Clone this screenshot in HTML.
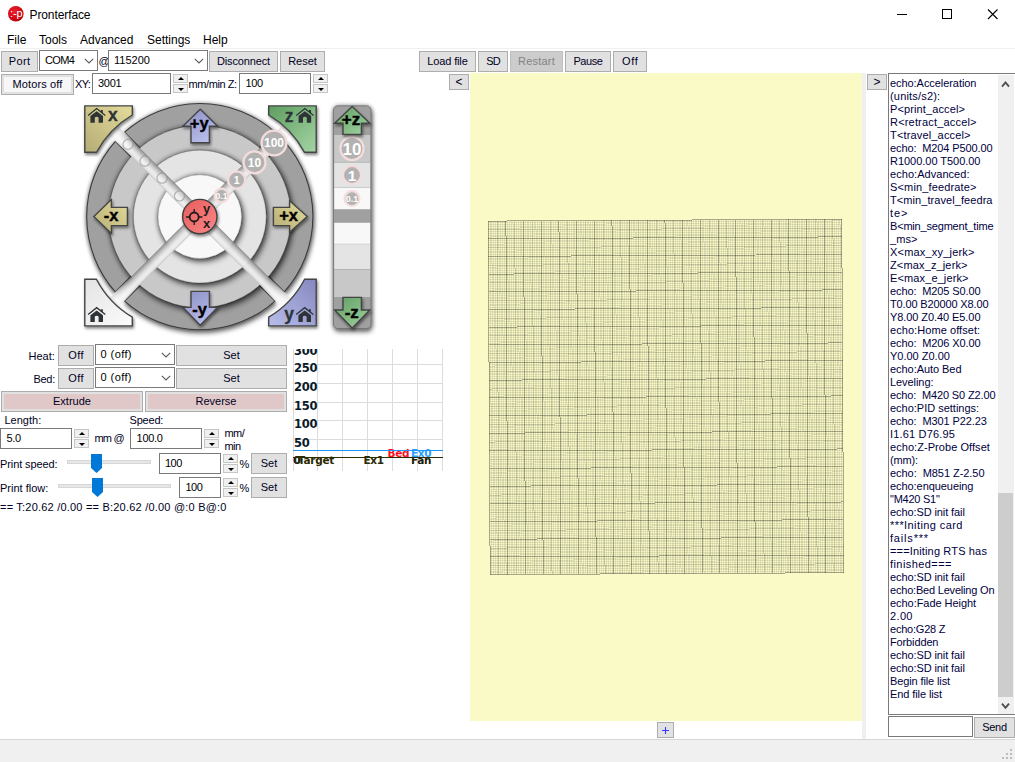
<!DOCTYPE html><html><head><meta charset="utf-8"><title>Pronterface</title><style>
html,body{margin:0;padding:0;}
body{width:1015px;height:762px;overflow:hidden;background:#fff;position:relative;font-family:"Liberation Sans",sans-serif;font-size:11px;color:#000;}
.a{position:absolute;white-space:nowrap;}
.t{position:absolute;white-space:nowrap;line-height:13px;font-size:11px;color:#000022;}
.btn{position:absolute;box-sizing:border-box;background:#e1e1e1;border:1px solid #adadad;text-align:center;font-size:11px;white-space:nowrap;color:#000022;}
.dis{background:#cccccc;border-color:#bfbfbf;color:#838383;}
.fld{position:absolute;box-sizing:border-box;background:#fff;border:1px solid #7a7a7a;font-size:11px;white-space:nowrap;}
.sp{position:absolute;box-sizing:border-box;background:#f0f0f0;border:1px solid #c6c6c6;}
.sp i{position:absolute;left:50%;margin-left:-3px;width:0;height:0;border-left:3px solid transparent;border-right:3px solid transparent;}
.sp i.u{border-bottom:3px solid #000;top:2px;}
.sp i.d{border-top:3px solid #000;top:3px;}
.log{position:absolute;left:890px;top:77px;color:#000040;font-size:11px;line-height:13px;white-space:pre;}
.gl{position:absolute;font-family:"DejaVu Sans","Liberation Sans",sans-serif;font-weight:bold;font-size:11px;line-height:13px;white-space:nowrap;}
</style></head><body>
<svg class="a" style="left:7px;top:5px" width="18" height="18" viewBox="0 0 18 18"><defs><radialGradient id="ic" cx="0.4" cy="0.35" r="0.75"><stop offset="0" stop-color="#e8222c"/><stop offset="0.55" stop-color="#d60a16"/><stop offset="0.85" stop-color="#b8000c"/><stop offset="1" stop-color="#6e0006"/></radialGradient></defs><circle cx="8.8" cy="8.8" r="7.8" fill="url(#ic)"/><text x="2.9" y="11.6" font-family="Liberation Sans,sans-serif" font-size="11" fill="#fff">:-p</text></svg>
<span class="t" style="left:29.5px;top:9px;font-size:12px;color:#000;letter-spacing:-0.1px;">Pronterface</span>
<svg class="a" style="left:890px;top:0" width="125" height="30" viewBox="890 0 125 30"><g fill="none" stroke="#000" stroke-width="1"><path d="M897 14.5H907"/><rect x="942.5" y="9.5" width="9" height="9"/><path d="M988 9.5 L997.5 19 M997.5 9.5 L988 19" stroke-width="1.1"/></g></svg>
<span class="t" style="left:7px;top:34px;font-size:12px;color:#000;">File</span>
<span class="t" style="left:39px;top:34px;font-size:12px;color:#000;">Tools</span>
<span class="t" style="left:80px;top:34px;font-size:12px;color:#000;">Advanced</span>
<span class="t" style="left:147px;top:34px;font-size:12px;color:#000;">Settings</span>
<span class="t" style="left:203px;top:34px;font-size:12px;color:#000;">Help</span>
<div class="a" style="left:0;top:48px;width:1015px;height:1px;background:#f0f0f0"></div>
<div class="btn " style="left:1px;top:51px;width:37px;height:21px;line-height:19px;letter-spacing:0.4px;text-indent:0.4px;">Port</div>
<div class="fld" style="left:39px;top:50px;width:59px;height:21px;line-height:19px;padding-left:5px;"><span style="letter-spacing:-0.6px">COM4</span></div>
<svg class="a" style="left:83px;top:56.5px" width="12" height="8" viewBox="0 0 12 8"><path d="M1.8 1.8 L6 6 L10.2 1.8" fill="none" stroke="#5a5a5a" stroke-width="1.1"/></svg>
<span class="t" style="left:98.5px;top:55px;">@</span>
<div class="fld" style="left:108px;top:50px;width:100px;height:21px;line-height:19px;padding-left:5px;">115200</div>
<svg class="a" style="left:193px;top:56.5px" width="12" height="8" viewBox="0 0 12 8"><path d="M1.8 1.8 L6 6 L10.2 1.8" fill="none" stroke="#5a5a5a" stroke-width="1.1"/></svg>
<div class="btn " style="left:209px;top:51px;width:69px;height:21px;line-height:19px;letter-spacing:-0.14px;">Disconnect</div>
<div class="btn " style="left:280px;top:51px;width:45px;height:21px;line-height:19px;">Reset</div>
<div class="btn " style="left:419px;top:51px;width:57px;height:21px;line-height:19px;letter-spacing:-0.14px;">Load file</div>
<div class="btn " style="left:478px;top:51px;width:30px;height:21px;line-height:19px;letter-spacing:-0.8px;">SD</div>
<div class="btn dis" style="left:510px;top:51px;width:53px;height:21px;line-height:19px;letter-spacing:0.2px;">Restart</div>
<div class="btn " style="left:565px;top:51px;width:46px;height:21px;line-height:19px;letter-spacing:-0.4px;">Pause</div>
<div class="btn " style="left:613px;top:51px;width:34px;height:21px;line-height:19px;letter-spacing:0.7px;text-indent:0.7px;">Off</div>
<div class="btn " style="left:1px;top:74px;width:73px;height:21px;line-height:19px;letter-spacing:0.13px;background:#f6f6f6;box-shadow:inset 0 0 0 2px #e1e1e1;">Motors off</div>
<span class="t" style="left:75px;top:78px;letter-spacing:-0.7px;">XY:</span>
<div class="fld" style="left:92px;top:73px;width:79px;height:21px;line-height:19px;padding-left:5px;"><span style="letter-spacing:-0.25px">3001</span></div>
<div class="sp" style="left:173px;top:74px;width:15px;height:9px"><i class="u"></i></div>
<div class="sp" style="left:173px;top:84px;width:15px;height:9px"><i class="d"></i></div>
<span class="t" style="left:188.6px;top:78px;letter-spacing:-0.42px;">mm/min Z:</span>
<div class="fld" style="left:239px;top:73px;width:72px;height:21px;line-height:19px;padding-left:5.4px;"><span style="letter-spacing:-0.3px">100</span></div>
<div class="sp" style="left:313px;top:74px;width:15px;height:9px"><i class="u"></i></div>
<div class="sp" style="left:313px;top:84px;width:15px;height:9px"><i class="d"></i></div>
<div class="btn " style="left:449px;top:74px;width:20px;height:16px;line-height:14px;font-size:12px;">&lt;</div>
<div class="btn " style="left:867px;top:74px;width:20px;height:16px;line-height:14px;font-size:12px;">&gt;</div>
<div class="a" style="left:470px;top:73px;width:392px;height:648px;background:#fafac7"></div>
<div class="a" style="left:862px;top:73px;width:4px;height:666px;background:#f0f0f0"></div>
<svg class="a" style="left:470px;top:73px" width="392" height="648" viewBox="470 73 392 648" shape-rendering="crispEdges"><g transform="translate(665.95 396.9) rotate(-0.31)" fill="none" stroke="#0f0f0f" stroke-width="1"><path stroke-opacity="0.09" d="M-174.98 -176.75V176.75M-176.75 -174.98H176.75M-173.22 -176.75V176.75M-176.75 -173.22H176.75M-171.45 -176.75V176.75M-176.75 -171.45H176.75M-169.68 -176.75V176.75M-176.75 -169.68H176.75M-166.15 -176.75V176.75M-176.75 -166.15H176.75M-164.38 -176.75V176.75M-176.75 -164.38H176.75M-162.61 -176.75V176.75M-176.75 -162.61H176.75M-160.84 -176.75V176.75M-176.75 -160.84H176.75M-157.31 -176.75V176.75M-176.75 -157.31H176.75M-155.54 -176.75V176.75M-176.75 -155.54H176.75M-153.77 -176.75V176.75M-176.75 -153.77H176.75M-152.00 -176.75V176.75M-176.75 -152.00H176.75M-148.47 -176.75V176.75M-176.75 -148.47H176.75M-146.70 -176.75V176.75M-176.75 -146.70H176.75M-144.94 -176.75V176.75M-176.75 -144.94H176.75M-143.17 -176.75V176.75M-176.75 -143.17H176.75M-139.63 -176.75V176.75M-176.75 -139.63H176.75M-137.87 -176.75V176.75M-176.75 -137.87H176.75M-136.10 -176.75V176.75M-176.75 -136.10H176.75M-134.33 -176.75V176.75M-176.75 -134.33H176.75M-130.80 -176.75V176.75M-176.75 -130.80H176.75M-129.03 -176.75V176.75M-176.75 -129.03H176.75M-127.26 -176.75V176.75M-176.75 -127.26H176.75M-125.49 -176.75V176.75M-176.75 -125.49H176.75M-121.96 -176.75V176.75M-176.75 -121.96H176.75M-120.19 -176.75V176.75M-176.75 -120.19H176.75M-118.42 -176.75V176.75M-176.75 -118.42H176.75M-116.66 -176.75V176.75M-176.75 -116.66H176.75M-113.12 -176.75V176.75M-176.75 -113.12H176.75M-111.35 -176.75V176.75M-176.75 -111.35H176.75M-109.58 -176.75V176.75M-176.75 -109.58H176.75M-107.82 -176.75V176.75M-176.75 -107.82H176.75M-104.28 -176.75V176.75M-176.75 -104.28H176.75M-102.52 -176.75V176.75M-176.75 -102.52H176.75M-100.75 -176.75V176.75M-176.75 -100.75H176.75M-98.98 -176.75V176.75M-176.75 -98.98H176.75M-95.44 -176.75V176.75M-176.75 -95.44H176.75M-93.68 -176.75V176.75M-176.75 -93.68H176.75M-91.91 -176.75V176.75M-176.75 -91.91H176.75M-90.14 -176.75V176.75M-176.75 -90.14H176.75M-86.61 -176.75V176.75M-176.75 -86.61H176.75M-84.84 -176.75V176.75M-176.75 -84.84H176.75M-83.07 -176.75V176.75M-176.75 -83.07H176.75M-81.30 -176.75V176.75M-176.75 -81.30H176.75M-77.77 -176.75V176.75M-176.75 -77.77H176.75M-76.00 -176.75V176.75M-176.75 -76.00H176.75M-74.23 -176.75V176.75M-176.75 -74.23H176.75M-72.47 -176.75V176.75M-176.75 -72.47H176.75M-68.93 -176.75V176.75M-176.75 -68.93H176.75M-67.16 -176.75V176.75M-176.75 -67.16H176.75M-65.40 -176.75V176.75M-176.75 -65.40H176.75M-63.63 -176.75V176.75M-176.75 -63.63H176.75M-60.09 -176.75V176.75M-176.75 -60.09H176.75M-58.33 -176.75V176.75M-176.75 -58.33H176.75M-56.56 -176.75V176.75M-176.75 -56.56H176.75M-54.79 -176.75V176.75M-176.75 -54.79H176.75M-51.26 -176.75V176.75M-176.75 -51.26H176.75M-49.49 -176.75V176.75M-176.75 -49.49H176.75M-47.72 -176.75V176.75M-176.75 -47.72H176.75M-45.95 -176.75V176.75M-176.75 -45.95H176.75M-42.42 -176.75V176.75M-176.75 -42.42H176.75M-40.65 -176.75V176.75M-176.75 -40.65H176.75M-38.88 -176.75V176.75M-176.75 -38.88H176.75M-37.12 -176.75V176.75M-176.75 -37.12H176.75M-33.58 -176.75V176.75M-176.75 -33.58H176.75M-31.81 -176.75V176.75M-176.75 -31.81H176.75M-30.05 -176.75V176.75M-176.75 -30.05H176.75M-28.28 -176.75V176.75M-176.75 -28.28H176.75M-24.75 -176.75V176.75M-176.75 -24.75H176.75M-22.98 -176.75V176.75M-176.75 -22.98H176.75M-21.21 -176.75V176.75M-176.75 -21.21H176.75M-19.44 -176.75V176.75M-176.75 -19.44H176.75M-15.91 -176.75V176.75M-176.75 -15.91H176.75M-14.14 -176.75V176.75M-176.75 -14.14H176.75M-12.37 -176.75V176.75M-176.75 -12.37H176.75M-10.60 -176.75V176.75M-176.75 -10.60H176.75M-7.07 -176.75V176.75M-176.75 -7.07H176.75M-5.30 -176.75V176.75M-176.75 -5.30H176.75M-3.53 -176.75V176.75M-176.75 -3.53H176.75M-1.77 -176.75V176.75M-176.75 -1.77H176.75M1.77 -176.75V176.75M-176.75 1.77H176.75M3.53 -176.75V176.75M-176.75 3.53H176.75M5.30 -176.75V176.75M-176.75 5.30H176.75M7.07 -176.75V176.75M-176.75 7.07H176.75M10.61 -176.75V176.75M-176.75 10.61H176.75M12.37 -176.75V176.75M-176.75 12.37H176.75M14.14 -176.75V176.75M-176.75 14.14H176.75M15.91 -176.75V176.75M-176.75 15.91H176.75M19.44 -176.75V176.75M-176.75 19.44H176.75M21.21 -176.75V176.75M-176.75 21.21H176.75M22.98 -176.75V176.75M-176.75 22.98H176.75M24.75 -176.75V176.75M-176.75 24.75H176.75M28.28 -176.75V176.75M-176.75 28.28H176.75M30.05 -176.75V176.75M-176.75 30.05H176.75M31.81 -176.75V176.75M-176.75 31.81H176.75M33.58 -176.75V176.75M-176.75 33.58H176.75M37.12 -176.75V176.75M-176.75 37.12H176.75M38.89 -176.75V176.75M-176.75 38.89H176.75M40.65 -176.75V176.75M-176.75 40.65H176.75M42.42 -176.75V176.75M-176.75 42.42H176.75M45.96 -176.75V176.75M-176.75 45.96H176.75M47.72 -176.75V176.75M-176.75 47.72H176.75M49.49 -176.75V176.75M-176.75 49.49H176.75M51.26 -176.75V176.75M-176.75 51.26H176.75M54.79 -176.75V176.75M-176.75 54.79H176.75M56.56 -176.75V176.75M-176.75 56.56H176.75M58.33 -176.75V176.75M-176.75 58.33H176.75M60.09 -176.75V176.75M-176.75 60.09H176.75M63.63 -176.75V176.75M-176.75 63.63H176.75M65.40 -176.75V176.75M-176.75 65.40H176.75M67.17 -176.75V176.75M-176.75 67.17H176.75M68.93 -176.75V176.75M-176.75 68.93H176.75M72.47 -176.75V176.75M-176.75 72.47H176.75M74.24 -176.75V176.75M-176.75 74.24H176.75M76.00 -176.75V176.75M-176.75 76.00H176.75M77.77 -176.75V176.75M-176.75 77.77H176.75M81.31 -176.75V176.75M-176.75 81.31H176.75M83.07 -176.75V176.75M-176.75 83.07H176.75M84.84 -176.75V176.75M-176.75 84.84H176.75M86.61 -176.75V176.75M-176.75 86.61H176.75M90.14 -176.75V176.75M-176.75 90.14H176.75M91.91 -176.75V176.75M-176.75 91.91H176.75M93.68 -176.75V176.75M-176.75 93.68H176.75M95.44 -176.75V176.75M-176.75 95.44H176.75M98.98 -176.75V176.75M-176.75 98.98H176.75M100.75 -176.75V176.75M-176.75 100.75H176.75M102.51 -176.75V176.75M-176.75 102.51H176.75M104.28 -176.75V176.75M-176.75 104.28H176.75M107.82 -176.75V176.75M-176.75 107.82H176.75M109.59 -176.75V176.75M-176.75 109.59H176.75M111.35 -176.75V176.75M-176.75 111.35H176.75M113.12 -176.75V176.75M-176.75 113.12H176.75M116.66 -176.75V176.75M-176.75 116.66H176.75M118.42 -176.75V176.75M-176.75 118.42H176.75M120.19 -176.75V176.75M-176.75 120.19H176.75M121.96 -176.75V176.75M-176.75 121.96H176.75M125.49 -176.75V176.75M-176.75 125.49H176.75M127.26 -176.75V176.75M-176.75 127.26H176.75M129.03 -176.75V176.75M-176.75 129.03H176.75M130.80 -176.75V176.75M-176.75 130.80H176.75M134.33 -176.75V176.75M-176.75 134.33H176.75M136.10 -176.75V176.75M-176.75 136.10H176.75M137.87 -176.75V176.75M-176.75 137.87H176.75M139.63 -176.75V176.75M-176.75 139.63H176.75M143.17 -176.75V176.75M-176.75 143.17H176.75M144.94 -176.75V176.75M-176.75 144.94H176.75M146.70 -176.75V176.75M-176.75 146.70H176.75M148.47 -176.75V176.75M-176.75 148.47H176.75M152.00 -176.75V176.75M-176.75 152.00H176.75M153.77 -176.75V176.75M-176.75 153.77H176.75M155.54 -176.75V176.75M-176.75 155.54H176.75M157.31 -176.75V176.75M-176.75 157.31H176.75M160.84 -176.75V176.75M-176.75 160.84H176.75M162.61 -176.75V176.75M-176.75 162.61H176.75M164.38 -176.75V176.75M-176.75 164.38H176.75M166.15 -176.75V176.75M-176.75 166.15H176.75M169.68 -176.75V176.75M-176.75 169.68H176.75M171.45 -176.75V176.75M-176.75 171.45H176.75M173.22 -176.75V176.75M-176.75 173.22H176.75M174.98 -176.75V176.75M-176.75 174.98H176.75"/><path stroke-opacity="0.19" d="M-167.91 -176.75V176.75M-176.75 -167.91H176.75M-150.24 -176.75V176.75M-176.75 -150.24H176.75M-132.56 -176.75V176.75M-176.75 -132.56H176.75M-114.89 -176.75V176.75M-176.75 -114.89H176.75M-97.21 -176.75V176.75M-176.75 -97.21H176.75M-79.54 -176.75V176.75M-176.75 -79.54H176.75M-61.86 -176.75V176.75M-176.75 -61.86H176.75M-44.19 -176.75V176.75M-176.75 -44.19H176.75M-26.51 -176.75V176.75M-176.75 -26.51H176.75M-8.84 -176.75V176.75M-176.75 -8.84H176.75M8.84 -176.75V176.75M-176.75 8.84H176.75M26.51 -176.75V176.75M-176.75 26.51H176.75M44.19 -176.75V176.75M-176.75 44.19H176.75M61.86 -176.75V176.75M-176.75 61.86H176.75M79.54 -176.75V176.75M-176.75 79.54H176.75M97.21 -176.75V176.75M-176.75 97.21H176.75M114.89 -176.75V176.75M-176.75 114.89H176.75M132.56 -176.75V176.75M-176.75 132.56H176.75M150.24 -176.75V176.75M-176.75 150.24H176.75M167.91 -176.75V176.75M-176.75 167.91H176.75"/><path stroke-opacity="0.35" d="M-176.75 -176.75V176.75M-176.75 -176.75H176.75M-159.07 -176.75V176.75M-176.75 -159.07H176.75M-141.40 -176.75V176.75M-176.75 -141.40H176.75M-123.72 -176.75V176.75M-176.75 -123.72H176.75M-106.05 -176.75V176.75M-176.75 -106.05H176.75M-88.38 -176.75V176.75M-176.75 -88.38H176.75M-70.70 -176.75V176.75M-176.75 -70.70H176.75M-53.02 -176.75V176.75M-176.75 -53.02H176.75M-35.35 -176.75V176.75M-176.75 -35.35H176.75M-17.67 -176.75V176.75M-176.75 -17.67H176.75M0.00 -176.75V176.75M-176.75 0.00H176.75M17.68 -176.75V176.75M-176.75 17.68H176.75M35.35 -176.75V176.75M-176.75 35.35H176.75M53.03 -176.75V176.75M-176.75 53.03H176.75M70.70 -176.75V176.75M-176.75 70.70H176.75M88.38 -176.75V176.75M-176.75 88.38H176.75M106.05 -176.75V176.75M-176.75 106.05H176.75M123.73 -176.75V176.75M-176.75 123.73H176.75M141.40 -176.75V176.75M-176.75 141.40H176.75M159.07 -176.75V176.75M-176.75 159.07H176.75M176.75 -176.75V176.75M-176.75 176.75H176.75"/></g></svg>
<div class="btn " style="left:657px;top:722px;width:17px;height:16px;line-height:14px;"></div>
<svg class="a" style="left:657px;top:722px" width="17" height="16"><path d="M5 8.5H12 M8.5 5V12" stroke="#3a3aff" stroke-width="1.1" fill="none"/></svg>
<div class="a" style="left:888px;top:73px;width:127px;height:642px;box-sizing:border-box;border:1px solid #7a7a7a;border-right:none;background:#fff"></div>
<div class="log"><div style="letter-spacing:-0.06px">echo:Acceleration</div><div style="letter-spacing:0.18px">(units/s2):</div><div style="letter-spacing:0.116px">P&lt;print_accel&gt;</div><div style="letter-spacing:0.182px">R&lt;retract_accel&gt;</div><div style="letter-spacing:0.16px">T&lt;travel_accel&gt;</div><div style="letter-spacing:-0.115px">echo:  M204 P500.00</div><div style="letter-spacing:-0.029px">R1000.00 T500.00</div><div style="letter-spacing:0.047px">echo:Advanced:</div><div style="letter-spacing:0.151px">S&lt;min_feedrate&gt;</div><div style="letter-spacing:0.072px">T&lt;min_travel_feedra</div><div style="letter-spacing:0.9px">te&gt;</div><div style="letter-spacing:-0.188px">B&lt;min_segment_time</div><div style="letter-spacing:0.094px">_ms&gt;</div><div style="letter-spacing:0.197px">X&lt;max_xy_jerk&gt;</div><div style="letter-spacing:0.141px">Z&lt;max_z_jerk&gt;</div><div style="letter-spacing:0.121px">E&lt;max_e_jerk&gt;</div><div style="letter-spacing:-0.115px">echo:  M205 S0.00</div><div style="letter-spacing:-0.142px">T0.00 B20000 X8.00</div><div style="letter-spacing:-0.077px">Y8.00 Z0.40 E5.00</div><div style="letter-spacing:0.064px">echo:Home offset:</div><div style="letter-spacing:-0.115px">echo:  M206 X0.00</div><div style="letter-spacing:-0.004px">Y0.00 Z0.00</div><div style="letter-spacing:-0.056px">echo:Auto Bed</div><div style="letter-spacing:-0.068px">Leveling:</div><div style="letter-spacing:-0.144px">echo:  M420 S0 Z2.00</div><div style="letter-spacing:-0.011px">echo:PID settings:</div><div style="letter-spacing:-0.092px">echo:  M301 P22.23</div><div style="letter-spacing:0.173px">I1.61 D76.95</div><div style="letter-spacing:0.058px">echo:Z-Probe Offset</div><div style="letter-spacing:-0.155px">(mm):</div><div style="letter-spacing:-0.052px">echo:  M851 Z-2.50</div><div style="letter-spacing:-0.066px">echo:enqueueing</div><div style="letter-spacing:-0.243px">&quot;M420 S1&quot;</div><div style="letter-spacing:-0.096px">echo:SD init fail</div><div style="letter-spacing:0.417px">***Initing card</div><div style="letter-spacing:0.813px">fails***</div><div style="letter-spacing:0.154px">===Initing RTS has</div><div style="letter-spacing:0.431px">finished===</div><div style="letter-spacing:-0.096px">echo:SD init fail</div><div style="letter-spacing:-0.197px">echo:Bed Leveling On</div><div style="letter-spacing:-0.05px">echo:Fade Height</div><div style="letter-spacing:0.359px">2.00</div><div style="letter-spacing:-0.22px">echo:G28 Z</div><div style="letter-spacing:-0.131px">Forbidden</div><div style="letter-spacing:-0.096px">echo:SD init fail</div><div style="letter-spacing:-0.096px">echo:SD init fail</div><div style="letter-spacing:-0.119px">Begin file list</div><div style="letter-spacing:-0.092px">End file list</div></div>
<div class="a" style="left:998px;top:75px;width:16px;height:639px;background:#f0f0f0"></div>
<div class="a" style="left:998px;top:493px;width:15px;height:204px;background:#cdcdcd"></div>
<svg class="a" style="left:998px;top:74px" width="16" height="641"><g fill="none" stroke="#505050" stroke-width="1.9"><path d="M4 12.6 L7.5 8.4 L11 12.6"/><path d="M4 629.6 L7.5 633.8 L11 629.6"/></g></svg>
<div class="fld" style="left:888px;top:716px;width:85px;height:21px;line-height:19px;padding-left:5px;"></div>
<div class="btn " style="left:974px;top:717px;width:41px;height:21px;line-height:19px;letter-spacing:-0.3px;">Send</div>
<div class="a" style="left:0;top:739px;width:1015px;height:23px;background:#f0f0f0;border-top:1px solid #d7d7d7;box-sizing:border-box"></div>
<svg class="a" style="left:1001px;top:748px" width="14" height="14"><g fill="#bcbcbc"><rect x="9" y="1" width="2" height="2"/><rect x="5" y="5" width="2" height="2"/><rect x="9" y="5" width="2" height="2"/><rect x="1" y="9" width="2" height="2"/><rect x="5" y="9" width="2" height="2"/><rect x="9" y="9" width="2" height="2"/></g></svg>
<span class="t" style="left:28.5px;top:350px;">Heat:</span>
<div class="btn " style="left:58px;top:345px;width:36px;height:21px;line-height:19px;letter-spacing:0.4px;text-indent:0.4px;">Off</div>
<div class="fld" style="left:95px;top:344px;width:80px;height:21px;line-height:19px;padding-left:4.6px;"><span style="letter-spacing:0.4px">0 (off)</span></div>
<svg class="a" style="left:160px;top:350.5px" width="12" height="8" viewBox="0 0 12 8"><path d="M1.8 1.8 L6 6 L10.2 1.8" fill="none" stroke="#5a5a5a" stroke-width="1.1"/></svg>
<div class="btn " style="left:176px;top:345px;width:111px;height:21px;line-height:19px;">Set</div>
<span class="t" style="left:33.5px;top:373px;letter-spacing:-0.3px;">Bed:</span>
<div class="btn " style="left:58px;top:368px;width:36px;height:21px;line-height:19px;letter-spacing:0.4px;text-indent:0.4px;">Off</div>
<div class="fld" style="left:95px;top:367px;width:80px;height:21px;line-height:19px;padding-left:4.6px;"><span style="letter-spacing:0.4px">0 (off)</span></div>
<svg class="a" style="left:160px;top:373.5px" width="12" height="8" viewBox="0 0 12 8"><path d="M1.8 1.8 L6 6 L10.2 1.8" fill="none" stroke="#5a5a5a" stroke-width="1.1"/></svg>
<div class="btn " style="left:176px;top:368px;width:111px;height:21px;line-height:19px;">Set</div>
<div class="btn " style="left:1px;top:391px;width:142px;height:21px;line-height:19px;background:#e1c8c8;box-shadow:inset 0 0 0 2px #e1e1e1;">Extrude</div>
<div class="btn " style="left:145px;top:391px;width:142px;height:21px;line-height:19px;background:#e1c8c8;box-shadow:inset 0 0 0 2px #e1e1e1;">Reverse</div>
<span class="t" style="left:4.5px;top:414px;">Length:</span>
<span class="t" style="left:129.5px;top:414px;letter-spacing:-0.2px;">Speed:</span>
<div class="fld" style="left:0px;top:428px;width:72px;height:21px;line-height:19px;padding-left:5.4px;"><span style="letter-spacing:-0.3px">5.0</span></div>
<div class="sp" style="left:74px;top:429px;width:15px;height:9px"><i class="u"></i></div>
<div class="sp" style="left:74px;top:439px;width:15px;height:9px"><i class="d"></i></div>
<span class="t" style="left:94.5px;top:432px;letter-spacing:-0.8px;">mm @</span>
<div class="fld" style="left:130px;top:428px;width:72px;height:21px;line-height:19px;padding-left:5.6px;"><span style="letter-spacing:-0.3px">100.0</span></div>
<div class="sp" style="left:204px;top:429px;width:15px;height:9px"><i class="u"></i></div>
<div class="sp" style="left:204px;top:439px;width:15px;height:9px"><i class="d"></i></div>
<span class="t" style="left:224.5px;top:427px;letter-spacing:-0.6px;">mm/</span>
<span class="t" style="left:224.5px;top:440px;letter-spacing:-0.6px;">min</span>
<span class="t" style="left:0px;top:457.5px;letter-spacing:-0.1px;">Print speed:</span>
<div class="a" style="left:67px;top:460px;width:84px;height:4px;box-sizing:border-box;background:#e7e7e7;border:1px solid #d6d6d6"></div>
<svg class="a" style="left:91px;top:454px" width="11" height="19"><path d="M0 0H11V14L5.5 19L0 14Z" fill="#0078d7"/></svg>
<div class="fld" style="left:159px;top:453px;width:62px;height:21px;line-height:19px;padding-left:5px;"><span style="letter-spacing:-0.5px">100</span></div>
<div class="sp" style="left:223px;top:454px;width:15px;height:9px"><i class="u"></i></div>
<div class="sp" style="left:223px;top:464px;width:15px;height:9px"><i class="d"></i></div>
<span class="t" style="left:239.5px;top:458px;">%</span>
<div class="btn " style="left:251px;top:453px;width:36px;height:21px;line-height:19px;">Set</div>
<span class="t" style="left:0px;top:481.5px;">Print flow:</span>
<div class="a" style="left:58px;top:484px;width:113px;height:4px;box-sizing:border-box;background:#e7e7e7;border:1px solid #d6d6d6"></div>
<svg class="a" style="left:92px;top:478px" width="11" height="19"><path d="M0 0H11V14L5.5 19L0 14Z" fill="#0078d7"/></svg>
<div class="fld" style="left:179px;top:477px;width:42px;height:21px;line-height:19px;padding-left:5.4px;"><span style="letter-spacing:-0.5px">100</span></div>
<div class="sp" style="left:223px;top:478px;width:15px;height:9px"><i class="u"></i></div>
<div class="sp" style="left:223px;top:488px;width:15px;height:9px"><i class="d"></i></div>
<span class="t" style="left:239.5px;top:482px;">%</span>
<div class="btn " style="left:251px;top:477px;width:36px;height:21px;line-height:19px;">Set</div>
<span class="t" style="left:0px;top:501px;letter-spacing:0.21px;">== T:20.62 /0.00 == B:20.62 /0.00 @:0 B@:0</span>
<div class="a" style="left:293px;top:349px;width:151px;height:122px;overflow:hidden"><svg class="a" style="left:0;top:0" width="151" height="122" viewBox="293 349 151 122" shape-rendering="crispEdges"><g stroke="#dcdcdc" stroke-width="1" fill="none"><path d="M293.5 349V471"/><path d="M317.5 349V471"/><path d="M342.5 349V471"/><path d="M367.5 349V471"/><path d="M392.5 349V471"/><path d="M417.5 349V471"/><path d="M442.5 349V471"/><path d="M293 364.5H443"/><path d="M293 383.5H443"/><path d="M293 402.5H443"/><path d="M293 420.5H443"/><path d="M293 439.5H443"/></g></svg><span class="gl" style="left:1px;top:-4.5px;color:#0a1a2a;font-size:11.5px;letter-spacing:-0.2px">300</span><span class="gl" style="left:1px;top:13px;color:#0a1a2a;font-size:11.5px;letter-spacing:-0.2px">250</span><span class="gl" style="left:1px;top:32px;color:#0a1a2a;font-size:11.5px;letter-spacing:-0.2px">200</span><span class="gl" style="left:1px;top:50.5px;color:#0a1a2a;font-size:11.5px;letter-spacing:-0.2px">150</span><span class="gl" style="left:1px;top:69px;color:#0a1a2a;font-size:11.5px;letter-spacing:-0.2px">100</span><span class="gl" style="left:1px;top:87.5px;color:#0a1a2a;font-size:11.5px;letter-spacing:-0.2px">50</span><span class="gl" style="left:0px;top:105px;color:#1e1ecc">0</span><span class="gl" style="left:0.5px;top:105px;color:#2a2a00">0</span><span class="gl" style="left:5px;top:105px;color:#2a2a00;font-size:10.5px;letter-spacing:-0.3px">Target</span><span class="gl" style="left:70.5px;top:105px;color:#2a2a00;font-size:10.5px;letter-spacing:-0.3px">Ex1</span><span class="gl" style="left:118px;top:105px;color:#1a1a00;font-size:10.5px;letter-spacing:-0.3px">Fan</span><span class="gl" style="left:94.5px;top:98px;color:#ff1020;font-size:10.5px;letter-spacing:-0.3px">Bed</span><span class="gl" style="left:118px;top:98px;color:#28a0ff;font-size:10.5px;letter-spacing:-0.3px">Ex0</span><svg class="a" style="left:0;top:0" width="151" height="122" viewBox="293 349 151 122" shape-rendering="crispEdges"><path d="M293 450.5H443" stroke="#1e96ff" stroke-width="1"/><path d="M293 457.5H443" stroke="#2d2d00" stroke-width="1"/></svg></div>
<svg class="a" style="left:70px;top:95px" width="320" height="250" viewBox="70 95 320 250" font-family="Liberation Sans, sans-serif" font-weight="bold">
<defs>
<filter id="sh" x="-20%" y="-20%" width="140%" height="140%"><feGaussianBlur in="SourceAlpha" stdDeviation="2.8" result="b1"/><feOffset in="b1" dx="1" dy="2.5" result="o1"/><feComponentTransfer in="o1" result="s1"><feFuncA type="linear" slope="0.55"/></feComponentTransfer><feGaussianBlur in="SourceAlpha" stdDeviation="2.2" result="b2"/><feComponentTransfer in="b2" result="s2"><feFuncA type="linear" slope="0.4"/></feComponentTransfer><feMerge><feMergeNode in="s2"/><feMergeNode in="s1"/><feMergeNode in="SourceGraphic"/></feMerge></filter>
<filter id="shd" x="-20%" y="-20%" width="140%" height="140%"><feGaussianBlur in="SourceAlpha" stdDeviation="3.4" result="b1"/><feOffset in="b1" dx="2.4" dy="3.4" result="o1"/><feComponentTransfer in="o1" result="s1"><feFuncA type="linear" slope="0.65"/></feComponentTransfer><feGaussianBlur in="SourceAlpha" stdDeviation="2.6" result="b2"/><feComponentTransfer in="b2" result="s2"><feFuncA type="linear" slope="0.5"/></feComponentTransfer><feMerge><feMergeNode in="s2"/><feMergeNode in="s1"/><feMergeNode in="SourceGraphic"/></feMerge></filter>
<filter id="sh2" x="-30%" y="-30%" width="160%" height="160%"><feGaussianBlur in="SourceAlpha" stdDeviation="1.6"/><feOffset dx="1" dy="1.5"/><feComponentTransfer><feFuncA type="linear" slope="0.5"/></feComponentTransfer><feMerge><feMergeNode/><feMergeNode in="SourceGraphic"/></feMerge></filter>
<linearGradient id="gy" x1="0" y1="0" x2="0.6" y2="1"><stop offset="0" stop-color="#8a8fc6"/><stop offset="1" stop-color="#b9bdea"/></linearGradient>
<linearGradient id="gy2" x1="1" y1="0" x2="0" y2="1"><stop offset="0" stop-color="#8488bf"/><stop offset="1" stop-color="#b9bdea"/></linearGradient>
<linearGradient id="gx" x1="0" y1="1" x2="1" y2="0"><stop offset="0" stop-color="#b4ac74"/><stop offset="1" stop-color="#e4dc9c"/></linearGradient>
<linearGradient id="gz" x1="0" y1="0" x2="1" y2="1"><stop offset="0" stop-color="#5e9e60"/><stop offset="1" stop-color="#a4d4a4"/></linearGradient>
<linearGradient id="gh" x1="0" y1="0" x2="1" y2="1"><stop offset="0" stop-color="#e4e4e4"/><stop offset="1" stop-color="#fbfbfb"/></linearGradient>
<linearGradient id="gr" x1="0" y1="0" x2="1" y2="1"><stop offset="0" stop-color="#e85c5c"/><stop offset="1" stop-color="#fa8888"/></linearGradient>
<linearGradient id="band" x1="0" y1="0" x2="0" y2="1"><stop offset="0" stop-color="#787878" stop-opacity="0.85"/><stop offset="0.1" stop-color="#9c9c9c" stop-opacity="0.9"/><stop offset="0.3" stop-color="#c6c6c6" stop-opacity="0.95"/><stop offset="0.55" stop-color="#e8e8e8" stop-opacity="0.97"/><stop offset="0.72" stop-color="#eeeeee" stop-opacity="0.97"/><stop offset="0.9" stop-color="#e2e2e2" stop-opacity="0.95"/><stop offset="1" stop-color="#b8b8b8" stop-opacity="0.85"/></linearGradient>
<linearGradient id="fade" x1="0" y1="0" x2="1" y2="0"><stop offset="0" stop-color="#fff" stop-opacity="0"/><stop offset="0.5" stop-color="#fff" stop-opacity="0.45"/><stop offset="1" stop-color="#fff" stop-opacity="0.9"/></linearGradient>
<clipPath id="cR3"><circle cx="199.8" cy="216.6" r="91.2"/></clipPath>
<g id="house"><path d="M0.3 7.3 L8.9 0.5 L17.5 7.3" fill="none" stroke="#2e3436" stroke-width="1.3" stroke-linejoin="miter"/><path d="M13 2 h2 v3.6 l-2 -1.6z" fill="#2e3436"/><path d="M2.6 8 L8.9 3.2 L15.2 8 V14.7 H10.8 V9.4 Q8.9 7.8 7 9.4 V14.7 H2.6Z" fill="#2e3436"/></g>
</defs>
<g filter="url(#sh)">
<path transform="translate(199.8 216.6) rotate(0)" d="M0 -9.19 L-75.25 -84.44 A113.1 113.1 0 0 1 75.25 -84.44 Z" fill="#a0a0a0" stroke="#3c3c3c" stroke-width="1.1"/>
<path transform="translate(199.8 216.6) rotate(90)" d="M0 -9.19 L-75.25 -84.44 A113.1 113.1 0 0 1 75.25 -84.44 Z" fill="#a0a0a0" stroke="#3c3c3c" stroke-width="1.1"/>
<path transform="translate(199.8 216.6) rotate(180)" d="M0 -9.19 L-75.25 -84.44 A113.1 113.1 0 0 1 75.25 -84.44 Z" fill="#a0a0a0" stroke="#3c3c3c" stroke-width="1.1"/>
<path transform="translate(199.8 216.6) rotate(270)" d="M0 -9.19 L-75.25 -84.44 A113.1 113.1 0 0 1 75.25 -84.44 Z" fill="#a0a0a0" stroke="#3c3c3c" stroke-width="1.1"/>
</g>
<circle cx="199.8" cy="216.6" r="91.2" fill="#c8c8c8" stroke="#000" stroke-opacity="0.42" stroke-width="0.8" filter="url(#shd)"/>
<circle cx="199.8" cy="216.6" r="66.4" fill="#e4e4e4" stroke="#000" stroke-opacity="0.32" stroke-width="0.8" filter="url(#shd)"/>
<circle cx="199.8" cy="216.6" r="41.8" fill="#f8f8f8" stroke="#000" stroke-opacity="0.25" stroke-width="0.7" filter="url(#shd)"/>
<g transform="translate(199.8 216.6) rotate(45)"><rect x="10" y="-6" width="112" height="12" fill="url(#band)"/><rect x="96" y="-6.5" width="27" height="13" fill="url(#fade)"/></g>
<g transform="translate(199.8 216.6) rotate(135) scale(1 -1)"><rect x="10" y="-6" width="112" height="12" fill="url(#band)"/><rect x="96" y="-6.5" width="27" height="13" fill="url(#fade)"/></g>
<g transform="translate(199.8 216.6) rotate(225) scale(1 -1)"><rect x="10" y="-6" width="112" height="12" fill="url(#band)"/><rect x="96" y="-6.5" width="27" height="13" fill="url(#fade)"/></g>
<g transform="translate(199.8 216.6) rotate(315)"><rect x="10" y="-6" width="112" height="12" fill="url(#band)"/><rect x="96" y="-6.5" width="27" height="13" fill="url(#fade)"/></g>
<circle cx="128" cy="144.4" r="5" fill="#fff" fill-opacity="0.25" stroke="#8c8c8c" stroke-opacity="0.6" stroke-width="1.2"/>
<circle cx="145" cy="161.2" r="5" fill="#fff" fill-opacity="0.25" stroke="#8c8c8c" stroke-opacity="0.6" stroke-width="1.2"/>
<circle cx="162" cy="178.2" r="5" fill="#fff" fill-opacity="0.25" stroke="#8c8c8c" stroke-opacity="0.6" stroke-width="1.2"/>
<circle cx="179.4" cy="196" r="5" fill="#fff" fill-opacity="0.25" stroke="#8c8c8c" stroke-opacity="0.6" stroke-width="1.2"/>
<circle cx="274" cy="143" r="12.4" fill="#b2b2b2" stroke="#f3dcdc" stroke-width="2.4"/>
<text x="274" y="147.3" font-size="12" fill="#fff" text-anchor="middle">100</text>
<circle cx="254.5" cy="162.4" r="11" fill="#b2b2b2" stroke="#f3dcdc" stroke-width="2.4"/>
<text x="254.5" y="166.7" font-size="12" fill="#fff" text-anchor="middle">10</text>
<circle cx="236.6" cy="180" r="8.6" fill="#b2b2b2" stroke="#f3dcdc" stroke-width="2.4"/>
<text x="236.6" y="183.8" font-size="10.5" fill="#fff" text-anchor="middle">1</text>
<circle cx="221.5" cy="195.4" r="6.8" fill="#b2b2b2" stroke="#f3dcdc" stroke-width="2.4"/>
<text x="221.5" y="198.5" font-size="8.5" fill="#fff" text-anchor="middle">0.1</text>
<circle cx="199.8" cy="216.6" r="17.200000000000003" fill="url(#gr)" stroke="#404040" stroke-width="1.4" filter="url(#sh2)"/>
<g fill="none" stroke="#1c1c1c" stroke-width="1.8"><circle cx="194.2" cy="217" r="4.5"/><path d="M194.2 209V212.6 M194.2 221.4V225 M186 217H189.8 M198.6 217H202.4" stroke-width="1.3"/></g>
<text x="203" y="212.5" font-size="13" fill="#1c1c1c">y</text><text x="203" y="227.5" font-size="13" fill="#1c1c1c">x</text>
<path d="M200.2 109.2 L217.6 126.2 H209.4 V142.8 H191 V126.2 H182.8Z" fill="url(#gy)" stroke="#444" stroke-width="1.4" stroke-linejoin="miter" filter="url(#sh2)"/>
<text x="199.2" y="129.2" font-size="16.5" stroke="#000" stroke-width="0.4" text-anchor="middle">+y</text>
<path d="M200.2 325.2 L217.4 307.4 H209.4 V291.4 H191 V307.4 H183Z" fill="url(#gy)" stroke="#444" stroke-width="1.4" stroke-linejoin="miter" filter="url(#sh2)"/>
<text x="199.6" y="315" font-size="16.5" text-anchor="middle" stroke="#000" stroke-width="0.4">-y</text>
<path d="M93.8 216.4 L111.4 199.6 V207.4 H127.4 V225.6 H111.4 V233.4Z" fill="url(#gx)" stroke="#444" stroke-width="1.4" stroke-linejoin="miter" filter="url(#sh2)"/>
<text x="111" y="221" font-size="16.5" text-anchor="middle" stroke="#000" stroke-width="0.4">-x</text>
<path d="M307.2 216.4 L289.6 200.8 V207.4 H273.4 V225.6 H289.6 V232.2Z" fill="url(#gx)" stroke="#444" stroke-width="1.4" stroke-linejoin="miter" filter="url(#sh2)"/>
<text x="288.6" y="221" font-size="16.5" text-anchor="middle" stroke="#000" stroke-width="0.4">+x</text>
<path d="M84.8 105.9 H132.3 V115 A95.0 95.0 0 0 0 96.6 152.2 H84.8Z" fill="url(#gx)" stroke="#444" stroke-width="1.4" stroke-linejoin="miter" filter="url(#sh2)"/>
<use href="#house" x="87.8" y="108.1"/><text x="108.1" y="120.8" font-size="17.5" fill="#2e3436" stroke="#2e3436" stroke-width="0.3">x</text>
<path d="M268.7 105.9 H316.2 V152.2 H304.4 A95.0 95.0 0 0 0 268.7 115Z" fill="url(#gz)" stroke="#444" stroke-width="1.4" stroke-linejoin="miter" filter="url(#sh2)"/>
<text x="284.8" y="122" font-size="17.5" fill="#2e3436" stroke="#2e3436" stroke-width="0.3">z</text><use href="#house" x="296" y="108.1"/>
<path d="M316.2 279.3 V325.9 H268.7 V317.2 A95.0 95.0 0 0 0 304.6 279.3Z" fill="url(#gy2)" stroke="#444" stroke-width="1.4" stroke-linejoin="miter" filter="url(#sh2)"/>
<text x="284.2" y="319.8" font-size="17.5" fill="#2e3436" stroke="#2e3436" stroke-width="0.3">y</text><use href="#house" x="295.8" y="307.2"/>
<path d="M84.8 279.3 H96.4 A95.0 95.0 0 0 0 132.3 317.2 V325.9 H84.8Z" fill="url(#gh)" stroke="#444" stroke-width="1.4" stroke-linejoin="miter" filter="url(#sh2)"/>
<use href="#house" x="87.8" y="307.2"/>
<g filter="url(#sh)"><rect x="333.4" y="105.8" width="37.60000000000002" height="222.8" rx="4.5" fill="#a0a0a0" stroke="#6a6a6a" stroke-width="0.8"/></g>
<rect x="334.2" y="135" width="36.0" height="27.400000000000006" fill="#c8c8c8"/>
<rect x="334.2" y="162.4" width="36.0" height="25.0" fill="#e4e4e4"/>
<rect x="334.2" y="187.4" width="36.0" height="21.799999999999983" fill="#f8f8f8"/>
<rect x="334.2" y="222.8" width="36.0" height="21.19999999999999" fill="#f8f8f8"/>
<rect x="334.2" y="244" width="36.0" height="25.399999999999977" fill="#e4e4e4"/>
<rect x="334.2" y="269.4" width="36.0" height="27.600000000000023" fill="#c8c8c8"/>
<path d="M334.2 162.4H370.2" stroke="#000" stroke-opacity="0.12" stroke-width="0.8"/>
<path d="M334.2 187.4H370.2" stroke="#000" stroke-opacity="0.12" stroke-width="0.8"/>
<path d="M334.2 244H370.2" stroke="#000" stroke-opacity="0.12" stroke-width="0.8"/>
<path d="M334.2 269.4H370.2" stroke="#000" stroke-opacity="0.12" stroke-width="0.8"/>
<circle cx="352" cy="148.4" r="11.6" fill="#b2b2b2" stroke="#f3dcdc" stroke-width="2.2"/>
<text x="352" y="154.5" font-size="17" fill="#fff" text-anchor="middle">10</text>
<circle cx="352" cy="175" r="9" fill="#b2b2b2" stroke="#f3dcdc" stroke-width="2.2"/>
<text x="352" y="180.6" font-size="15.5" fill="#fff" text-anchor="middle">1</text>
<circle cx="352" cy="198.6" r="7.4" fill="#b2b2b2" stroke="#f3dcdc" stroke-width="2.2"/>
<text x="352" y="201.8" font-size="9" fill="#fff" text-anchor="middle">0.1</text>
<path d="M352.2 106.4 L369.8 123.2 H361.4 V134.4 H343 V123.2 H334.6Z" fill="url(#gz)" stroke="#444" stroke-width="1.4" stroke-linejoin="miter" filter="url(#sh2)"/>
<text x="351" y="125.2" font-size="17" text-anchor="middle" stroke="#000" stroke-width="0.4">+z</text>
<path d="M352.2 328 L369.8 310 H361.4 V297.4 H343 V310 H334.6Z" fill="url(#gz)" stroke="#444" stroke-width="1.4" stroke-linejoin="miter" filter="url(#sh2)"/>
<text x="351.8" y="318" font-size="17" text-anchor="middle" stroke="#000" stroke-width="0.4">-z</text>
</svg>
</body></html>
